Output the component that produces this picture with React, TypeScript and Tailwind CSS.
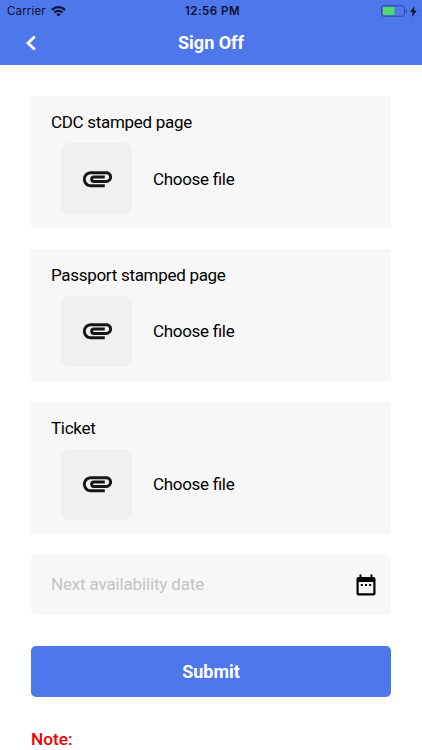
import { MdAttachment } from 'react-icons/md';

const uploads = ["CDC stamped page", "Passport stamped page", "Ticket"];

const StatusBar = () => (
  <div className="grid h-[22px] grid-cols-3 items-center pl-[7px] pr-[5px] font-['Inter',sans-serif] text-[11.5px] text-[#0b1230]">
    <div className="flex items-center gap-[5px]">
      <span className="pt-px tracking-[0.15px]">Carrier</span>
      <svg width="15" height="11" viewBox="0 0 15 11" fill="none" stroke="currentColor" strokeWidth="2.2">
        <path d="M1 3.9a9.2 9.2 0 0 1 13 0" />
        <path d="M3.4 6.5a5.8 5.8 0 0 1 8.2 0" />
        <path d="M7.5 10.5 5.3 8.3a3.1 3.1 0 0 1 4.4 0z" fill="currentColor" stroke="none" />
      </svg>
    </div>
    <span className="pl-px pt-px text-center font-semibold tracking-[0.5px]">12:56 PM</span>
    <div className="flex items-center justify-end gap-[3px]">
      <svg width="27" height="12" viewBox="0 0 27 12" fill="none">
        <rect x="1.5" y="0.75" width="23" height="10.5" rx="2.5" stroke="#2f4796" strokeWidth="1" />
        <rect x="3" y="2" width="11.5" height="8" rx="1" fill="#4cd964" />
        <path d="M25.5 4v4c1-.3 1.5-1 1.5-2S26.5 4.300 25.500 4z" fill="#2f4796" />
      </svg>
      <svg width="7" height="11" viewBox="0 0 7 11" fill="currentColor">
        <path d="M4.6 0 0.2 6h2.5L1.8 11 6.8 4.5H4z" />
      </svg>
    </div>
  </div>
);

const BackIcon = () => (
  <svg width="12" height="16" viewBox="0 0 12 16" fill="none" stroke="white" strokeWidth="2.8">
    <path d="M9.8 1.5 3 8l6.8 6.500" />
  </svg>
);

const CalendarIcon = () => (
  <svg width="20" height="22" viewBox="0 0 20 22" fill="black">
    <path
      fillRule="evenodd"
      d="M3.5 0.5h2V3h9V0.5h2V3H17.5a2 2 0 0 1 2 2v14.5a2 2 0 0 1-2 2h-15a2 2 0 0 1-2-2V5a2 2 0 0 1 2-2h1zM2.7 8v11.3h14.600V8z"
    />
    <path d="M4.8 10h2v2h-2zM9 10h2v2H9zM13.2 10h2v2h-2z" />
  </svg>
);

const UploadCard = ({ label }: { label: string }) => (
  <div className="h-[132px] bg-[#f7f7f7] pl-5 pt-[14px]">
    <p className="text-[17px] leading-6 tracking-[-0.3px] text-black">{label}</p>
    <button className="mt-[9px] flex items-center pl-[10px]">
      <span className="flex h-[71px] w-[71px] items-center justify-center rounded-lg bg-[#f0f0f0] pb-px pl-px">
        <MdAttachment className="h-[35px] w-[35px] text-[#161616]" />
      </span>
      <span className="ml-[21px] text-[17px] leading-6 tracking-[-0.3px] text-black [font-feature-settings:'liga']">
        Choose file
      </span>
    </button>
  </div>
);

export default function App() {
  return (
    <div className="h-[750px] w-full overflow-hidden bg-white font-['Roboto',sans-serif]">
      {/* Header */}
      <header className="h-[65.3px] bg-[#4f77ec]">
        <StatusBar />
        <div className="grid h-[41px] grid-cols-[60px_1fr_60px] items-center">
          <button className="pl-[25px]">
            <BackIcon />
          </button>
          <h1 className="text-center text-[18px] font-bold text-white">Sign Off</h1>
        </div>
      </header>

      {/* Form */}
      <main className="px-[31px] pt-[31px]">
        <div className="flex flex-col gap-[20.7px]">
          {uploads.map((label) => (
            <UploadCard key={label} label={label} />
          ))}
          <div className="flex h-[61px] items-center justify-between rounded-md bg-[#f7f7f7] pl-5 pr-[15.5px]">
            <span className="text-[17px] tracking-[-0.16px] text-[#c4c4c6]">Next availability date</span>
            <CalendarIcon />
          </div>
        </div>

        <button className="mt-[30.5px] h-[51px] w-full rounded-[5px] bg-[#4f77ec] text-[18px] font-bold text-white">
          Submit
        </button>
        <p className="mt-[30px] text-[17.3px] font-medium leading-6 text-[#f00000]">Note:</p>
      </main>
    </div>
  );
}
